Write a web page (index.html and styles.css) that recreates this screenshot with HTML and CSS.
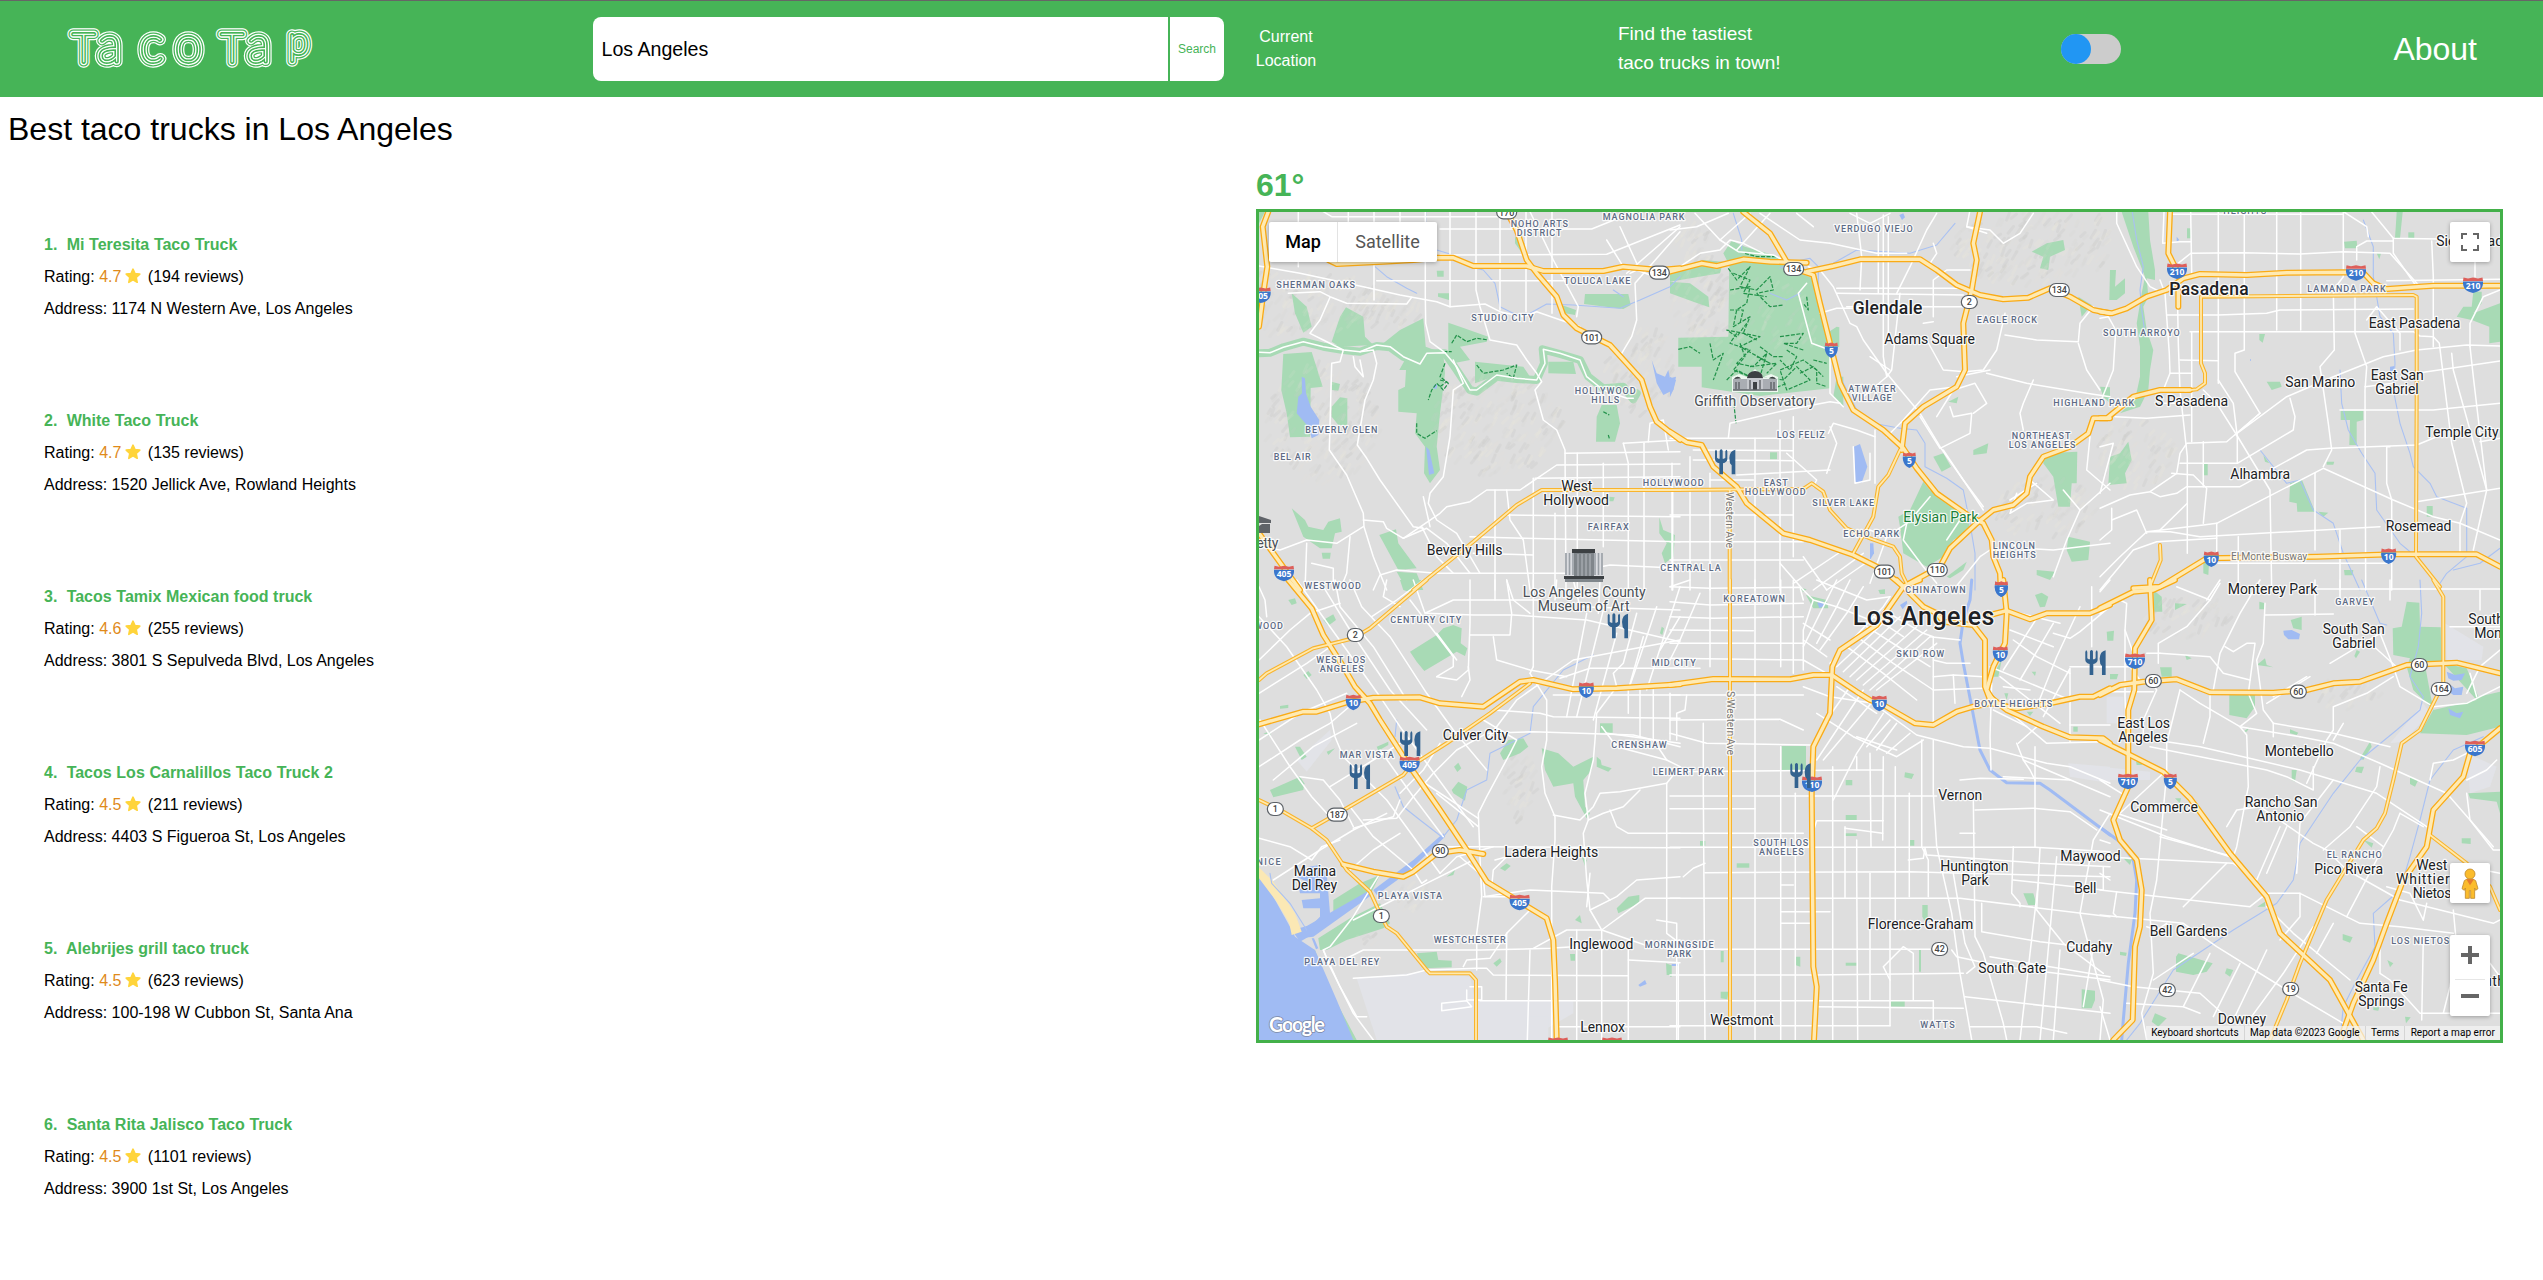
FILE: index.html
```html
<!DOCTYPE html>
<html lang="en">
<head>
<meta charset="utf-8">
<title>TacoTap</title>
<link rel="stylesheet" href="styles.css">
</head>
<body>
<header class="navbar">
  <svg class="logo" width="280" height="56" viewBox="0 0 280 56" role="img" aria-label="TacoTap">
    <defs>
      <text id="wordmark" y="40.500"><tspan class="cap" x="8.500">T</tspan><tspan class="low" x="34">a</tspan><tspan class="low" x="76">c</tspan><tspan class="low" x="111">o</tspan><tspan class="cap" x="157">T</tspan><tspan class="low" x="183">a</tspan><tspan class="pee" x="224.500" y="33">p</tspan></text>
    </defs>
    <use href="#wordmark" class="ring ring-5"/>
    <use href="#wordmark" class="ring ring-4"/>
    <use href="#wordmark" class="ring ring-3"/>
    <use href="#wordmark" class="ring ring-2"/>
    <use href="#wordmark" class="ring ring-1"/>
  </svg>
  <form class="search">
    <input class="search-input" type="text" value="Los Angeles" aria-label="City">
    <button class="search-button" type="button">Search</button>
  </form>
  <div class="current">Current<br>Location</div>
  <div class="tagline">Find the tastiest<br>taco trucks in town!</div>
  <div class="toggle"><span class="knob"></span></div>
  <a class="about">About</a>
</header>
<h1 class="heading">Best taco trucks in Los Angeles</h1>
<svg class="defs" width="0" height="0"><symbol id="star" viewBox="0 0 16 16"><path d="M8 1.2 10 5.6 14.8 6.1 11.2 9.4 12.2 14.3 8 11.9 3.8 14.3 4.8 9.4 1.2 6.1 6 5.6Z" fill="#ffd43b" stroke="#ffd43b" stroke-width="1.6" stroke-linejoin="round"/></symbol></svg>
<main class="content">
  <ul class="trucks">
    <li class="truck"><p class="name">1.&nbsp; Mi Teresita Taco Truck</p><p class="line">Rating: <span class="score">4.7</span><svg class="star"><use href="#star"/></svg> (194 reviews)</p><p class="line">Address: 1174 N Western Ave, Los Angeles</p></li>
    <li class="truck"><p class="name">2.&nbsp; White Taco Truck</p><p class="line">Rating: <span class="score">4.7</span><svg class="star"><use href="#star"/></svg> (135 reviews)</p><p class="line">Address: 1520 Jellick Ave, Rowland Heights</p></li>
    <li class="truck"><p class="name">3.&nbsp; Tacos Tamix Mexican food truck</p><p class="line">Rating: <span class="score">4.6</span><svg class="star"><use href="#star"/></svg> (255 reviews)</p><p class="line">Address: 3801 S Sepulveda Blvd, Los Angeles</p></li>
    <li class="truck"><p class="name">4.&nbsp; Tacos Los Carnalillos Taco Truck 2</p><p class="line">Rating: <span class="score">4.5</span><svg class="star"><use href="#star"/></svg> (211 reviews)</p><p class="line">Address: 4403 S Figueroa St, Los Angeles</p></li>
    <li class="truck"><p class="name">5.&nbsp; Alebrijes grill taco truck</p><p class="line">Rating: <span class="score">4.5</span><svg class="star"><use href="#star"/></svg> (623 reviews)</p><p class="line">Address: 100-198 W Cubbon St, Santa Ana</p></li>
    <li class="truck"><p class="name">6.&nbsp; Santa Rita Jalisco Taco Truck</p><p class="line">Rating: <span class="score">4.5</span><svg class="star"><use href="#star"/></svg> (1101 reviews)</p><p class="line">Address: 3900 1st St, Los Angeles</p></li>
  </ul>
  <section class="side">
    <div class="temp">61°</div>
    <div class="map">
      <svg id="canvas" class="canvas" viewBox="1259 212 1241 828"></svg>
      <div class="map-type"><span class="type-map">Map</span><span class="type-sat">Satellite</span></div>
      <div class="ctl full"><svg width="18" height="18" viewBox="0 0 18 18"><path d="M1 6V1H6M12 1H17V6M17 12V17H12M6 17H1V12" fill="none" stroke="#666" stroke-width="2"/></svg></div>
      <div class="ctl peg"><svg width="18" height="31" viewBox="0 0 54 93"><g stroke="#c18a2c" stroke-width="2.5" fill="#fbbc2c"><path d="M18 33H36L44 38 51 62 44 67 41 60V91H29V68H25V91H13V60L10 67 3 62 10 38Z"/><circle cx="27" cy="18" r="15"/></g><path d="M16 34H39L27 52Z" fill="#e57a2e"/></svg></div>
      <div class="ctl zoom"><span class="plus"></span><span class="rule"></span><span class="minus"></span></div>
      <div class="legal"><span>Keyboard shortcuts</span><span>Map data ©2023 Google</span><span>Terms</span><span>Report a map error</span></div>
    </div>
  </section>
</main>
<script src="map.js"></script>
</body>
</html>
```
FILE: styles.css
```css
* { box-sizing: border-box; }
body { margin: 0; height: 1280px; overflow: hidden; background: #fff; color: #000; font-family: "Liberation Sans", Arial, sans-serif; font-size: 16px; }
.navbar { display: grid; grid-template-columns: 593px 631px 124px 443px 333px 1fr; align-items: center; height: 97px; border-top: 1px solid #666; background: #46b457; color: #fff; }
.logo { margin-left: 64px; }
.logo text { font-family: Lato, sans-serif; font-weight: 100; }
.cap { font-size: 39px; }
.low { font-size: 49px; }
.pee { font-size: 37px; }
.ring { stroke-linejoin: round; }
.ring-5 { stroke: #fff; stroke-width: 11.4px; }
.ring-4 { stroke: #46b457; stroke-width: 9px; }
.ring-3 { stroke: #fff; stroke-width: 6.4px; }
.ring-2 { stroke: #46b457; stroke-width: 3.8px; }
.ring-1 { stroke: #fff; stroke-width: .5px; fill: #fff; }
.search { display: flex; gap: 2px; height: 64px; margin: 0; }
.search-input { width: 575px; height: 64px; padding: 0 8.5px; border: 0; border-radius: 8px 0 0 8px; font: 19.6px "Liberation Sans", Arial, sans-serif; color: #000; }
.search-button { width: 54px; height: 64px; padding: 0; border: 0; border-radius: 0 8px 8px 0; background: #fff; color: #46b457; font: 12px "Liberation Sans", Arial, sans-serif; }
.current { text-align: center; line-height: 24px; }
.tagline { padding: 0 0 2px 270px; font-size: 19px; line-height: 29px; white-space: nowrap; }
.toggle { width: 60px; height: 30px; margin-left: 270px; border-radius: 15px; background: #ccc; }
.knob { display: block; width: 30px; height: 30px; border-radius: 50%; background: #2196f3; }
.about { justify-self: end; padding-right: 66px; font-size: 32px; }
.heading { margin: 0; padding: 14px 8px 0; font-size: 32px; font-weight: 400; line-height: 37px; }
.defs { position: absolute; }
.content { display: flex; }
.trucks { list-style: none; width: 1256px; margin: 0; padding: 81px 0 0 44px; }
.truck { height: 176px; }
.truck p { margin: 0; line-height: 32px; }
.name { font-weight: 700; color: #46b457; word-spacing: .2px; }
.score { color: #e08a1a; }
.star { width: 18px; height: 16px; margin: 0 1px 0 3px; vertical-align: -2px; }
.side { width: 1247px; padding-top: 18px; }
.temp { height: 43px; line-height: 39px; font-size: 32px; font-weight: 700; color: #46b457; }
.map { position: relative; width: 1247px; height: 834px; border: 3px solid #43b049; overflow: hidden; background: #dedede; font-family: Roboto, sans-serif; }
.canvas { display: block; width: 1241px; height: 828px; }
.map-type { position: absolute; left: 10px; top: 10px; display: flex; height: 40px; border-radius: 2px; background: #fff; box-shadow: 0 1px 4px rgba(0,0,0,.3); font-size: 18px; line-height: 40px; }
.type-map { width: 69px; text-align: center; font-weight: 500; color: #000; border-right: 1px solid #e3e3e3; }
.type-sat { width: 99px; text-align: center; color: #565656; }
.ctl { position: absolute; right: 10px; width: 40px; display: flex; align-items: center; justify-content: center; border-radius: 2px; background: #fff; box-shadow: 0 1px 4px rgba(0,0,0,.3); }
.full { top: 10px; height: 40px; }
.peg { top: 651px; height: 40px; }
.zoom { top: 723px; height: 81px; flex-direction: column; justify-content: space-between; padding: 11px 0 18px; }
.plus { width: 18px; height: 18px; background: linear-gradient(#666,#666) center/18px 4px no-repeat, linear-gradient(#666,#666) center/4px 18px no-repeat; }
.rule { width: 30px; height: 1px; background: #e6e6e6; }
.minus { width: 18px; height: 4px; background: #666; }
.legal { position: absolute; right: 0; bottom: 0; display: flex; width: 354px; height: 14px; background: rgba(245,245,245,.7); font-size: 10px; line-height: 14px; color: #000; white-space: nowrap; letter-spacing: .04px; }
.legal span { flex: auto; text-align: center; }
.legal span + span { border-left: 1px solid #d5d5d5; }

.canvas text { font-family: Roboto, sans-serif; paint-order: stroke; stroke: rgba(255,255,255,.85); stroke-width: 2.4px; stroke-linejoin: round; }
.canvas polyline { fill: none; stroke-linejoin: round; stroke-linecap: round; }
.canvas .park { fill: #a8dab5; }
.canvas .band { stroke: #a8dab5; stroke-width: 8px; }
.canvas .water { fill: #a0bbf3; }
.canvas .sand { fill: #fbe8b4; }
.canvas .pale { fill: #e2e3e8; }
.canvas .stream { stroke: #a9c1f3; stroke-width: 1.1px; }
.canvas .river { stroke: #a0bbf3; stroke-width: 3px; }
.canvas .trail { stroke: #22924a; stroke-width: 1.2px; stroke-dasharray: 4 1.5; stroke-linecap: butt; }
.canvas .minor { stroke: #fff; stroke-width: 1.5px; }
.canvas .trunk-case { stroke: #f9b42d; stroke-width: 4px; }
.canvas .trunk { stroke: #ffe9ad; stroke-width: 1.8px; }
.canvas .motor-case { stroke: #faab15; stroke-width: 6px; }
.canvas .motor { stroke: #ffeab2; stroke-width: 3.4px; }
.canvas .city { font-size: 14px; fill: #202124; }
.canvas .town { font-size: 17.5px; font-weight: 500; fill: #202124; }
.canvas .metro { font-size: 25px; font-weight: 500; fill: #202124; }
.canvas .district { font-size: 9px; font-weight: 500; fill: #5d6b85; }
.canvas .poi { font-size: 14px; fill: #4a4f55; }
.canvas .green { font-size: 14px; fill: #188038; }
.canvas .street { font-size: 10.5px; fill: #777; }
.canvas .num { font-size: 9px; font-weight: 500; fill: #444; stroke: none; text-anchor: middle; }
.canvas .inum { font-family: "Open Sans", sans-serif; font-size: 8.6px; font-weight: 700; fill: #fff; stroke: none; text-anchor: middle; }
.canvas .brand { font-family: Lato, sans-serif; font-size: 20px; font-weight: 700; fill: #fff; stroke: #7d8aa8; stroke-width: 1.6px; }
```
FILE: map.js
```
// Map sheets: each has an origin (map pixels) and geometry in thirds of a pixel.
const sheets = [
{ o: [1240, 160],
  hills: "120,440,320,90;240,800,170,180;760,800,200,150;1200,640,110,130;420,470,120,50",
  park: "155,400 200,440 215,500 190,518 165,460;275,545 300,470 318,442 370,470 375,530 400,555 300,560;430,550 480,510 550,475 557,560 610,580 615,640 600,760 590,860 600,930 570,970 552,940 555,860 525,820 530,760 475,755 475,690 495,680 498,630 478,630 500,590;130,582 215,576 248,680 212,684 210,830 150,832 140,760 124,690;625,488 660,500 745,530 740,545 660,560 690,600 640,610 625,600;705,605 850,620 870,650 760,650 705,670;925,605 1000,605 1008,642 925,640;1085,735 1130,735 1140,790 1125,845 1068,845 1070,770;1035,402 1165,402 1172,435 1150,447 1032,432;590,332 611,332 611,350 592,350;594,400 627,400 627,420 594,410;275,665 300,672 295,692 275,690;275,740 300,712 322,715 322,795 295,795 275,770;155,1045 195,1080 205,1100 250,1110 265,1085 300,1075 305,1115 285,1120 275,1165 240,1165 190,1130;418,1125 468,1108 475,1150 530,1225 475,1230;470,1235 530,1240 550,1290 500,1290;1258,1072 1270,1110 1305,1125 1300,1190 1275,1210 1265,1180 1280,1150 1258,1120;825,230 853,250 850,285 825,250;57,155 75,155 57,190;245,1178 272,1178 270,1196 248,1196;1108,1010 1124,1012 1120,1024 1108,1024;950,430 1008,450 1005,465 975,460",
  band: "57,580 90,578 130,562 190,545 250,560 310,570 360,575 410,558 450,562 490,590 540,610 560,580 615,580 650,630 690,690 710,695 770,650 830,657 890,660 912,610 908,568 960,582 1020,600 1045,650 1090,685 1150,680 1180,718 1190,700",
  water: "185,650 195,655 198,700 212,740 238,780 235,825 215,835 205,800 170,760 175,710 186,700;558,860 568,870 583,940 567,945;1235,600 1250,640 1275,650 1285,630 1290,655 1308,650 1300,690 1270,705 1250,670;582,675 592,672 590,686 580,686",
  stream: "557,155 557,190;590,270 640,285 690,320 730,330 765,370 780,440 830,465 870,460 920,432 1000,435 1140,445 1200,420 1290,380 1320,350;405,320 440,350 500,385 530,400;1120,390 1150,410",
  trail: "635,550 650,525 680,545 710,535 745,540;615,610 600,650 625,670 610,690 590,670 575,690 565,720;530,790 530,820 555,835 590,812;710,615 730,640 790,630 830,615 820,655 800,640;610,575 635,575;1090,755 1108,765;1105,825 1108,835;600,660 620,665 600,680",
  minor: "175,155 175,320;325,155 325,280;402,155 402,420;480,155 480,290;556,155 556,410 557,490 570,545 615,578;630,155 630,440;708,155 708,390 720,440 750,540 830,555 860,600 890,640 905,665 885,690 910,780 950,810 975,870 978,1290;780,155 780,450;858,155 858,455;936,155 936,460;250,155 275,170 800,170;600,207 1055,207 1320,100;600,285 1100,283 1320,195;410,362 980,362;57,318 180,340 370,380 480,405 590,425 630,440 735,432 780,455 850,470 890,455 1020,500;145,400 240,395 270,410 320,430 500,432 515,412;270,412 240,480 210,520 250,540 310,570 300,605 275,610 268,870 320,945 370,1060 372,1100 400,1190 440,1290;57,577 90,578 130,562 190,545 250,560 310,570 360,575 410,555 450,560 490,590 540,612 560,580 615,578 650,620 690,690 710,690 770,645 830,655 890,660 915,610 910,568 960,580 1020,600 1040,650 1090,690 1160,715 1180,715;360,575 400,570 410,610 400,660 375,720 352,855 380,895 420,960 520,1100 550,1105;340,590 345,620 370,650 360,600;640,600 670,670 640,690 630,830 610,950 570,1000 565,1030 590,1080 650,1120 720,1240;975,880 1320,875;490,1135 600,1060 620,1040 690,1025 740,990 840,990 950,915 1320,912;370,1080 430,1085 440,1105 490,1135 560,1105 620,1150 690,1240;60,1160 120,1170 200,1140 290,1150 370,1100;765,990 765,1290;800,990 810,1080 850,1140 870,1290;880,955 880,1290;945,1060 945,1290;1012,880 1012,1290;1090,910 1090,1160;1150,850 1165,910 1165,1290;1212,850 1212,1290;1296,910 1296,1290;800,1065 1320,1070;690,1130 850,1135 1320,1145;700,1180 880,1185;400,1290 420,1245 470,1230 590,1240 980,1240 1110,1215 1320,1225;885,955 1320,950;1320,215 1185,370 1190,480 1175,530 1145,580;1170,340 1190,330 1230,345;1225,845 1230,790 1270,780 1285,870;1150,850 1320,840;870,155 940,300 1015,440 1010,470;1100,240 1150,320;1140,200 1190,310;1160,340 1320,200;545,1100 590,1190 640,1240;550,1010 570,1100;200,1150 195,1290;330,1130 320,1240 300,1290;215,1210 280,1225 280,1290",
  trunk: "1320,990 905,990 830,1035 700,1145 520,1290",
  motor: "85,155 68,200 75,260 82,320 70,400 57,500;57,1120 100,1180 140,1235 180,1290;265,300 290,312 430,305 520,300 590,293 640,293 700,318 860,318 910,333 1090,333 1150,320 1260,330 1320,325;800,155 830,210 860,300 890,340 950,410 970,465 1010,505 1060,530 1110,555 1160,610 1205,660 1230,740 1250,785 1320,840",
  district: "NOHO ARTS|812|984|200;DISTRICT|830|964|227;MAGNOLIA PARK|1088|1333|180;SHERMAN OAKS|109|345|384;TOLUCA LAKE|972|1171|372;STUDIO CITY|694|881|483;HOLLYWOOD|1004|1187|702;HILLS|1054|1138|729;BEVERLY GLEN|196|412|818;BEL AIR|101|212|899;HOLLYWOOD|1208|1391|978;FAIRFAX|1043|1166|1110;CENTRAL LA|1261|1442|1233;WESTWOOD|193|363|1286",
  city: "West|964|1057|993;Hollywood|910|1107|1035;Beverly Hills|560|787|1185",
  poi: "Getty|22|115|1165",
  oval: "1258,338,134;1055,532,101;800,157,170",
  inter: "62,405,405;132,1240,405" },
{ o: [1670, 190],
  hills: "80,330,90,130;250,430,180,160;1060,180,220,110;1120,960,150,90;60,160,50,60",
  park: "25,443 175,440 178,225 160,190 185,152 225,170 310,195 380,245 440,270 470,430 500,410 508,412 508,470 480,480 480,595 270,618 95,592 95,530 25,530;0,240 100,210 160,215 150,250 0,275;0,275 60,280 115,320 118,352 70,335 0,310;760,875 780,900 830,930 895,990 900,1020 850,1050 820,1100 770,1130 700,1090 690,1010 685,980 720,960;1120,790 1222,785 1220,880 1205,880 1200,950 1165,950 1150,860 1120,820;1195,1040 1260,1055 1255,1110 1205,1115 1190,1080;790,800 820,790 843,830 815,845;300,787 321,787 321,808 300,808;1225,320 1265,345 1235,380;1085,185 1130,160 1180,150 1185,180 1140,200 1135,240 1110,235 1120,200;910,780 955,760 950,790 910,795;1290,590 1320,592 1320,640 1300,620;500,560 520,560 520,650 490,620;830,1160 890,1115 880,1140 840,1165;1100,1140 1155,1145 1140,1170 1100,1155;835,635 865,620 860,640",
  water: "552,770 570,762 592,830 575,878 555,875;600,1060 610,1060 612,1090 600,1110;0,560 18,570 10,600 0,620;688,75 700,70 705,82 696,90",
  stream: "330,235 370,215 420,205 445,230 445,320 480,450 500,540 560,660 610,700 690,715;690,715 740,720 765,760 765,830 830,865 880,900 900,1000 915,1090 915,1200;490,220 560,180 720,190 800,165 855,100;300,310 350,330 390,310;450,360 470,430;190,70 215,150 215,180",
  trail: "225,190 260,200 320,200;175,235 200,270 240,230 210,290 260,300 300,260 310,300 260,310;180,300 240,290 230,340 200,360 190,410 240,380 220,430 260,450;200,430 180,460 240,480 200,520 250,530 290,490 270,560 340,570 380,530 420,570 350,600 330,540 400,510 440,540 440,580 470,590;120,460 130,510 160,490 130,570;25,478 60,470 90,490;260,310 300,350 340,345;230,400 200,440 170,420 270,440 210,470 300,520 260,500;330,440 400,430 380,460 340,460 400,480;410,320 415,360 400,340;170,570 200,540 260,570 300,600 350,580;240,530 320,520 290,550;190,625 198,700;430,510 470,520;270,470 310,500 340,500;180,360 220,360 210,400;190,250 240,270 220,310 290,320;210,460 225,500 190,540 240,560;350,480 380,500 360,540 330,510;390,550 430,530 460,560",
  minor: "75,70 150,150 205,185 310,195 350,215;0,120 80,110 175,70;150,150 240,70;200,180 300,70;270,70 390,150 480,160;380,70 430,110;0,250 90,190 150,180 180,150 220,160 280,190;415,230 450,240 490,290 540,400 560,410 580,450 650,550 750,670 810,770 880,870 940,950;560,70 575,200 570,300;540,70 600,100 660,70;625,100 625,310;640,75 640,500 650,560;655,80 655,450;480,160 620,190 710,190;680,310 720,230 770,120 800,70;500,295 890,295;500,310 880,315;530,350 900,350;690,310 665,540 650,560 580,620;790,160 800,190 780,220;790,380 790,270 830,240 900,240;660,540 600,500;900,60 890,110 950,130;1090,70 1050,130 1000,160 960,120 890,110;770,450 820,540 885,545 940,540 980,480 1005,370;1005,435 1100,450 1225,455 1230,400 1270,350;950,550 1070,580 1250,610 1320,620;1225,460 1250,540 1290,600;790,395 760,400;450,370 500,355 580,355;410,280 385,310 425,460 480,480 480,610 520,650;0,745 175,745 370,745;175,745 180,700 350,660 480,635 510,640;70,780 370,782;70,810 370,812;200,855 480,840;0,975 370,975;0,1055 400,1055;0,1110 400,1110;8,895 8,1200;60,800 60,1200;120,850 120,1200;255,745 255,1200;330,690 330,1200;370,680 370,1100;350,790 440,870 430,890;120,870 250,870;475,730 490,700 560,720 615,740;480,710 500,760 470,850;550,770 555,880 600,870 600,790;615,720 615,880;400,1100 470,1200;370,1180 520,1080;430,1200 580,1090;470,1200 600,1110;330,1120 400,1200;560,1040 600,1020 650,1040 600,1180;650,1040 710,1000 730,980 780,920;710,1000 700,1050 760,1130 800,1180;750,680 810,775 900,730 905,670 850,680 840,650;800,680 850,600 915,580 950,640 910,670;860,590 780,600 700,690 650,740;1090,570 1060,640 1050,670 1060,720;860,560 960,540;1040,910 1020,970 1070,940 1150,930 1080,870;1320,880 1230,960 1190,1050 1150,1160;1230,960 1180,900;1260,740 1250,840 1320,900;820,780 900,900 940,960;890,960 830,1050;1060,1075 1150,1080 1320,1060;850,1200 930,1100 960,1080;1100,880 1020,930",
  trunk: "0,900 400,897 425,880 460,905 480,960 530,1015 600,1045 670,1070 690,1100 695,1150 710,1180;690,780 655,855 625,890 610,980 550,1090;179,900 179,1200",
  motor: "0,245 95,220 140,228 220,208 300,215 410,218;410,245 490,228 570,208 750,208 800,240 860,285 930,315 1000,328 1075,323 1140,295 1200,320 1270,360 1320,370;220,66 300,130 350,215 385,240 430,255 450,340 485,480 510,580 550,660 640,720 700,775 740,835 800,910 900,980 940,1000 965,1050 970,1100 990,1150 992,1200;930,66 910,160 920,210 905,300 880,400 885,540 860,590 760,650 705,700 695,780;0,725 50,757 95,765 130,830 200,890 230,940 340,1030 420,1050 550,1095 640,1140 700,1190;1320,685 1270,685 1255,730 1200,770 1120,800 1080,860 1070,910 1030,945 970,960 920,1000 840,1075 810,1130 700,1190",
  district: "VERDUGO VIEJO|493|728|126;EAGLE ROCK|920|1101|399;SOUTH ARROYO|1299|1529|438;ATWATER|535|677|606;VILLAGE|545|665|633;HIGHLAND PARK|1150|1393|647;NORTHEAST|1025|1201|747;LOS ANGELES|1016|1216|774;LOS FELIZ|320|464|744;EAST|281|353|888;HOLLYWOOD|224|407|915;SILVER LAKE|427|612|948;ECHO PARK|520|688|1041;LINCOLN|968|1095|1077;HEIGHTS|968|1097|1104",
  town: "Glendale|548|757|373",
  city: "Adams Square|643|915|462",
  poi: "Griffith Observatory|73|436|648",
  green: "Elysian Park|700|925|996",
  oval: "371,237,134;898,336,2;1168,300,134;643,1145,101;802,1140,110",
  inter: "484,480,5;718,810,5;994,1197,5" },
{ o: [2100, 190],
  hills: "0,160,30,90;100,800,120,100",
  park: "65,66 145,66 150,150 165,240 165,270 140,265 145,320 130,350 140,420 160,480 150,540 145,600 120,650 60,670 105,630 120,560 120,470 110,400 125,310 135,260 100,170;30,240 48,240 45,290 75,265 75,310 50,330 28,330;890,66 908,66 900,145 885,145;732,155 770,152 772,175 735,175;261,115 272,115 272,145 261,145;1120,305 1145,305 1145,340 1120,370 1200,340 1200,455 1168,460 1168,410 1115,390 1070,380 1090,350 1115,350;500,575 540,575 545,590 515,600;722,662 790,662 790,690 770,695 770,765 748,765 750,690 722,690;570,880 605,868 645,965 592,965 590,940 568,935;980,948 998,948 998,980 980,980;30,800 60,790 85,755 95,810 75,850 80,880 25,885;312,820 323,820 323,856 312,856;925,127 943,127 943,145 925,145;478,432 495,432 488,458 478,450;732,1140 760,1140 758,1156 734,1156;310,1100 328,1110 325,1155 310,1150;655,965 685,968 670,980;680,815 703,815 700,824 680,824;830,190 843,190 838,208;490,795 508,820 495,815",
  water: "870,530 884,528 880,550 870,545;230,140 238,150 230,155;450,508 453,508 453,512 450,512",
  stream: "97,66 110,150 130,230 120,300 125,360 135,430;790,90 820,170 820,260 840,380 880,430 885,520 880,600 900,700 930,790 940,830 990,880 1010,920 1100,955 1100,1100 1040,1150 1020,1180;720,540 725,640 745,720 785,790 825,850 830,960 900,1060 960,1110;480,780 560,880 600,870 640,960 700,1000 730,1090 780,1200;1200,1075 1140,1120 1060,1140",
  minor: "50,66 50,100 110,230 150,290 190,310;272,66 275,250;192,66 188,160 240,155 272,155;212,73 730,73;222,230 272,190 430,188 600,192 730,185 870,190 960,290;355,66 355,580;433,66 433,480 405,490 405,545 480,670;530,66 530,420;602,66 602,420;730,66 730,260 700,300 703,480 660,530 685,700 695,780 670,830;732,66 800,110 805,140;815,66 880,145 1200,150;770,210 770,170 800,153 880,153;765,320 765,430 800,530 795,600 797,1200;880,145 880,190 950,290;995,153 1000,260 1000,470;200,375 355,375 500,370 540,360 940,357;270,425 940,425 960,438 1000,440 1018,460 1055,760 1100,940 1080,1000 1080,1090;480,670 405,735 560,620 700,560 850,500 950,480 1100,465 1200,468;0,955 90,915 150,905 230,850 240,790 260,760 380,755 480,670;0,385 25,380 47,420 40,540 0,640;180,270 195,310 208,490 210,550 190,600;233,360 235,460 240,600 262,800 262,1090;240,510 355,512;210,550 275,550;275,425 275,755;45,680 140,685 270,675;190,640 270,640;310,600 350,640 410,735 510,900 515,1200;355,570 400,640 412,740;240,820 412,820 580,720 585,680 570,625;150,905 180,920 230,910 260,890 420,890 520,835 620,780 690,775 950,765 1010,740;215,850 280,855 320,895 310,1000;140,1025 310,1005 350,1000 670,835 880,930 1000,980 1080,1000 1200,1050;0,1160 60,1100 140,1025 210,1025 300,1040 840,1010;0,1200 100,1080 170,1055 260,1050 350,1045;35,955 35,1020 0,1050;35,990 110,960 140,1030;262,940 180,1020;412,740 412,820;415,1040 415,1200;645,850 645,1080;720,1020 720,1200;870,770 860,770 860,880 875,930 875,1200;355,1120 870,1120;720,660 1000,660 1050,655 1200,640;950,550 1200,513;1140,755 1200,745;950,935 1200,895;1055,490 1060,540 1160,900 1120,1080;1110,470 1120,560 1160,900;1200,300 1150,320 1110,400 1110,470;310,755 310,890;350,1000 350,1120;1125,210 1125,260;860,272 1200,268;800,390 830,350 900,430 900,480;795,590 880,580;0,770 40,760 0,910",
  trunk: "255,602 290,598 315,580 315,550 303,520 303,320 940,315 950,320 950,600 948,1090;948,1100 1020,1190;180,1065 182,1110 150,1190;1128,290 1200,287",
  motor: "210,66 205,190 235,250;0,365 35,370 80,355 140,320 200,300 250,265 300,252 440,255 560,248 740,247 790,248 820,280 860,297 1000,287 1200,287;235,300 235,350;0,685 20,685 100,620 180,600 270,600;100,1195 180,1190 320,1105 650,1100 880,1093 1130,1093 1200,1130",
  district: "HEIGHTS|370|499|73;LAMANDA PARK|622|857|305",
  street: "El Monte Busway|393|622|1111",
  town: "Pasadena|208|446|316",
  city: "Sierra Madre|1009|1245|168;East Pasadena|806|1081|414;San Marino|556|766|591;East San|812|971|570;Gabriel|826|956|612;S Pasadena|165|384|648;Temple City|976|1196|741;Alhambra|391|570|867;Rosemead|857|1054|1023",
  inter: "231,243,210;768,248,210;1119,285,210;334,1107,10;866,1098,10" },
{ o: [1240, 580],
  hills: "830,620,50,110;520,960,60,40;370,1080,40,20",
  pale: "350,1195 560,1175 690,1190 705,1260 1000,1262 1000,1300 860,1380 410,1380;170,540 270,450 275,480 200,575;860,1310 925,1310 925,1380 860,1380",
  park: "510,215 590,165 610,145 640,135 665,145 662,190 682,205 675,228 650,215 553,273 530,245;480,0 545,0 520,40 490,30;780,520 805,480 850,475 865,500 840,520 790,540;905,505 955,520 1000,560 1060,530 1055,570 1030,600 1035,680 1050,700 1040,715 1005,650 1000,610 940,620 915,570;1070,530 1082,540 1085,555 1115,565 1105,575 1070,560;1080,430 1118,430 1118,458 1080,458;90,630 180,590 193,610 190,630 100,652;280,960 360,910 420,885 395,935 280,1025;235,1075 330,1015 420,970 450,1030 430,1045 320,1080 260,1110 240,1110;180,1095 225,1110 265,1220 350,1380 310,1380 260,1250 215,1160;530,1120 590,1115 595,1140 635,1142 635,1162 550,1165;1130,985 1165,950 1198,945 1198,970 1135,1000;635,630 655,605 682,620 675,662 640,640;165,500 180,500 200,530 185,540;250,120 280,103 288,120 265,137;190,285 205,273 215,285 200,297;120,378 145,374 145,384 120,386;642,560 655,548 664,565 652,576;780,865 800,850 812,858 795,873;410,500 445,485 445,495 415,512;760,1150 780,1135 785,1145 770,1160;1278,1150 1292,1155 1290,1185 1280,1185;145,60 165,55 170,70 155,75;1265,140 1272,145 1267,165 1260,160;990,1122 1005,1122 1005,1142 992,1142;1005,1020 1020,1005 1025,1030;70,460 90,455 92,468;620,890 645,870 640,885;1025,830 1040,840 1035,858;260,515 285,505 265,525",
  water: "57,890 100,950 150,1040 165,1070 225,1110 290,1260 340,1380 57,1380;170,1055 390,930 395,945 220,1070 180,1075;170,890 200,880 205,860 240,855 260,880 270,1000 255,1030 215,1035 240,1010 240,985 190,985 185,960 240,955 240,940 180,940 175,915 200,905;155,1050 235,1030 240,1050 180,1085;400,930 520,840 610,760 615,770 500,880 410,945;1195,1215 1215,1200 1220,1212 1200,1220;215,1075 222,1075 235,1105 228,1108",
  sand: "57,862 100,905 165,1000 185,1055 155,1065 148,1030 110,965 57,895",
  stream: "610,770 650,720 680,630 740,600 750,520 870,460 880,380 970,270 1060,225;605,770 540,720 490,680 465,620;90,880 95,910 150,970 200,1050;470,420 465,470",
  minor: "57,110 140,200 230,330 270,400 285,470 310,530 440,660 600,880;57,240 150,150 210,100 300,70;57,340 200,250 300,180;80,110 75,60 57,20;170,0 270,140 420,350 480,440 700,740;250,20 330,150 450,330 560,450;285,0 300,80 400,200 500,360;330,0 365,80 450,170 560,340 640,450 740,570;57,480 180,400 320,340;57,560 180,480 270,430 340,370;100,600 220,500 350,430;270,620 400,540 480,490;180,590 250,600 300,660 340,740;60,420 150,560 215,650 260,700;57,775 150,800 215,840 245,800 300,780;100,900 240,810 340,750 440,700;330,870 400,810 480,760;330,680 400,770 520,870 545,910 560,900;420,510 520,650 610,770;370,720 470,715 520,650 580,580 650,510 740,460 880,455 1180,465 1320,500;340,745 460,710 480,660;440,0 430,50 480,80;395,110 470,60 550,0;510,60 640,230 640,260 590,290;590,160 650,240;520,0 555,100 640,60 900,60;690,0 690,130 685,270 650,300 590,290;765,0 765,60;800,0 820,60 870,100;880,0 880,260;950,0 945,60;690,165 770,165 810,165 815,100 800,0;560,100 700,105 820,105 1040,120 1320,185;760,170 770,240 870,270 980,290;685,260 690,300 665,350;1000,0 1020,80 1320,90;1080,0 1075,100;880,260 870,280;1040,100 980,410;1090,90 1010,410;1130,160 1060,420;1190,100 1150,250 1120,280 1130,320 1070,400 1065,480 1060,540 1035,640 1045,720 1030,760 1040,900 1050,990 1085,1050 1085,1380;1210,170 1165,330 1165,400;1250,80 1200,230 1165,330;1320,20 1220,330;1320,110 1260,210;740,480 830,360 900,310 1000,240 1320,180;940,345 1320,345;760,390 900,400 940,410 1320,415;870,280 920,360 920,480 905,560 915,640 945,710 945,780 935,920 935,1380;730,420 830,480 810,520 740,650 715,700 720,830 725,950 710,1060 710,1170;540,600 715,715;590,640 715,740;480,640 550,570 600,490;1320,265 1050,265 960,295;1085,440 1130,500 1280,540 1320,560;1100,460 1320,490;940,705 1020,720 1060,680 1080,640 1140,635 1280,610 1320,560;1110,690 1130,740 1165,760 1320,760;1045,720 1090,700 1150,680 1200,630;600,800 715,800 1320,803;420,880 340,1010 270,1100 250,1110 270,1160 340,1300 400,1380;250,1110 300,1220 350,1310 380,1310;340,1020 400,990 540,920 700,840;600,880 650,830 760,800;660,830 730,890 735,950 810,950;730,950 870,930 1090,940 1110,960;1050,990 1130,950 1190,900 1320,890;1085,1050 1215,955 1320,955;880,1105 980,1050 1085,1050 1230,1100 1320,1080;310,1140 370,1110 720,1110 930,1105 1000,1100;670,1160 680,1140 750,1135 800,1060 870,990;340,1195 500,1185 560,1170 710,1165 740,1165 760,1185 1165,1187;720,1262 1320,1262;800,1060 798,1260;870,1110 862,1380;1010,1050 1010,1380;1165,1110 1165,1380;1165,1140 1320,1148;1280,610 1280,1060 1320,1090;1250,1020 1310,1030 1310,1380;605,1270 680,1262 695,1280 605,1292 605,1270;680,1230 680,1260 725,1260 725,1220 690,1220;950,1340 1320,1340;1050,880 1040,980;765,840 800,830 760,870 755,920;1200,330 1200,470;1240,330 1240,480 1280,540;1290,340 1290,480",
  trunk: "57,300 80,280 220,205 340,175 390,145 560,0;57,660 130,695 215,745 260,780 320,870 390,935 420,1000 440,1040 470,1060 560,1170 570,1180 690,1180 708,1200 708,1380;215,745 320,685 490,585 510,560 620,490 750,400 870,310",
  motor: "145,0 215,85 250,165 310,260 345,320 390,370 420,420 510,560 600,690 680,810 740,905 830,960 920,1015 940,1080 945,1200 950,1380;57,433 190,395 230,395 320,367 400,353 540,352 600,370 730,380 840,305 880,300 1000,328 1130,325 1320,313;310,853 400,875 490,890 520,875 590,820 660,810 730,822",
  district: "CENTURY CITY|451|664|128;WEST LOS|229|376|248;ANGELES|239|371|275;BRENTWOOD|-54|129|146;MID CITY|1235|1367|257;MAR VISTA|299|461|533;CRENSHAW|1114|1280|503;LEIMERT PARK|1238|1450|584;VENICE|8|122|854;PLAYA VISTA|413|606|956;WESTCHESTER|581|797|1088;PLAYA DEL REY|193|418|1154;MORNINGSIDE|1214|1421|1103;PARK|1281|1354|1130",
  city: "Culver City|608|804|480;Ladera Heights|793|1075|831;Marina|161|288|888;Del Rey|155|291|930;Inglewood|988|1180|1107;Lennox|1021|1155|1355",
  poi: "Los Angeles County|848|1217|51;Museum of Art|893|1169|93",
  oval: "346,165,2;106,687,1;292,704,187;601,813,90;424,1008,1",
  inter: "340,367,10;1039,330,10;509,553,405;839,967,405;954,1395,405;1116,1395,405" },
{ o: [1670, 580],
  pale: "1195,550 1320,560 1320,610 1200,590",
  park: "335,498 408,498 408,570 335,570;1095,45 1115,38 1135,50 1125,80 1110,82;408,45 470,60 475,85 430,85;1235,1228 1275,1232 1275,1260 1265,1285 1235,1285;1060,940 1090,940 1100,975 1075,975;757,975 773,975 773,1010 765,1025 757,1010;527,705 560,705 560,720 527,720;527,600 547,600 547,616 527,616;525,760 560,760 560,768 525,768;718,780 733,780 733,797 718,797;200,850 238,850 238,863 200,863;90,783 106,783 106,797 90,797;663,1263 704,1263 704,1280 663,1280;376,1130 391,1130 391,1160 376,1155;152,1113 161,1113 161,1147 152,1147;527,1148 560,1148 560,1157 527,1157;747,1110 753,1110 753,1175 747,1175;152,1235 175,1235 172,1258 152,1255;1210,440 1223,440 1223,455 1210,455;705,577 732,582 725,597 703,592;1003,340 1015,340 1010,360;965,290 995,240 985,290;1085,275 1098,275 1095,288;0,1155 5,1155 5,1190 0,1190;625,30 645,28 645,42 630,42;385,22 410,28 400,36;1070,395 1090,395 1080,408",
  water: "442,68 458,64 464,78 448,84;690,75 710,62 712,70 698,88;5,1152 24,1152 24,1158 5,1158",
  river: "905,0 900,60 880,120 870,190 880,250 905,380 930,510 960,570 1010,608 1110,610 1140,630 1220,690 1320,765",
  minor: "0,20 120,25 390,22 400,60;60,0 0,20;0,65 120,75 400,70;0,110 130,115 400,110;0,150 250,152;0,190 400,190;0,235 400,240;90,40 30,180 0,240;120,0 120,260;255,0 255,1380;332,0 332,260;370,0 370,280;0,265 90,265;0,345 400,345;50,345 45,390 20,400 20,480;100,430 100,620 105,1380;0,420 330,418 400,450;0,460 110,490 420,495;0,575 560,570;0,648 800,648;0,686 255,686;0,760 400,760;0,802 1095,802 1320,815;105,878 720,875 880,880 1320,890;40,890 70,865 105,850;0,955 870,955 1320,1010;0,1108 780,1108;0,1185 430,1185 880,1180;0,1262 790,1262;0,1337 660,1337;25,1150 25,1380;332,500 332,1380;376,640 376,1380;332,915 370,915;332,995 480,995;332,1030 420,1030;488,560 488,1380;525,740 525,955;600,520 603,800;560,780 560,880 563,1380;640,530 638,780;600,880 600,1260;676,560 676,1040;718,640 718,950;755,480 755,800 775,840 775,950;790,480 790,640 800,800 845,1000 870,1180 905,1380;560,530 560,570 640,570;415,800 440,722 640,722;525,745 638,760;715,840 760,835 765,805 770,825 1110,850 1320,860;850,880 885,1090 915,1160 890,1180;910,650 915,1070 940,1120 1000,1330 1010,1380;915,690 1090,685 1200,695 1280,750;870,760 915,760;870,600 930,595 1060,598;1000,590 1200,600;1095,500 1095,800;965,310 960,470 963,570;400,320 480,350 610,370 740,465 880,500 960,505 1130,550 1200,560 1320,610;400,270 400,150 430,60;400,130 480,180;400,180 470,230;400,240 470,280;480,250 640,80 660,50;500,260 660,110;520,275 690,110;540,290 720,120;560,300 740,140;580,315 770,150;600,330 780,170;620,330 800,190;470,420 540,320;440,540 580,330;460,540 620,350;490,660 560,520 640,400;590,500 660,420;620,510 680,430;650,520 720,460;440,400 550,470 680,530 760,480;560,470 680,510;500,320 620,400;590,140 700,210 780,260;560,170 670,250 790,330;530,200 640,280 740,360;610,110 700,170;640,90 760,160 790,170 790,440;400,30 430,60 500,80 600,120;500,0 470,60 420,160 400,200;540,0 500,80 440,190;580,20 530,100 450,210;440,0 590,60 660,50;780,170 870,180;790,240 830,250 900,250;790,290 850,285 940,290;790,330 940,325;850,285 855,370;1010,90 1170,130;1020,150 1150,200;1030,180 1100,230 1200,280;1000,270 1110,100;1050,300 1150,130;1100,380 1160,230 1230,80;1000,320 1080,330;960,260 1200,360;990,290 1170,430;1120,410 1200,265 1200,485;1200,260 1320,260;1200,435 1320,435;970,390 1070,440;1010,390 1130,490 1300,485;1040,490 1060,540 1080,570 1095,600;1045,490 1100,440;1150,160 1200,175 1230,155 1320,80;1265,20 1265,200;1110,805 1105,900 1100,990 1180,1090 1300,1180;1105,910 1080,1120 1050,1380;1030,800 1025,940 1050,970 1050,980;1320,700 1270,780 1230,1000 1300,1260 1290,1380;1160,830 1110,1380;1270,1100 1240,1280;935,970 935,1055 1110,1085 1320,1110;845,1110 860,1130 1000,1160 1320,1200;700,1100 730,1120 730,1260;660,1200 640,1160 700,1100;660,1040 660,1260 660,1337;885,1250 1320,1300;900,1340 1100,1340 1190,1360;440,1280 880,1285;790,1262 790,1340;1170,1110 1150,1380;960,1130 1320,1190;1030,900 1300,930;1060,540 1320,650",
  trunk: "180,0 180,1380",
  motor: "0,315 130,297 360,298 430,285 485,285 560,335 600,360 640,375 735,430 790,435 860,395 910,380 960,370 1040,385 1140,370 1230,350 1270,350 1320,325;700,20 620,135 510,210 487,260 480,400 430,500 425,640 430,1160 440,1220 432,1380;700,20 750,0;680,0 760,80 800,100 820,125 910,135 945,180 945,320 960,360;1000,0 1010,100 1005,190 970,260 950,330 975,370;960,105 1010,92 1080,118 1130,100 1260,100 1320,75;960,350 1010,390 1120,440 1200,472 1300,475 1320,490",
  district: "KOREATOWN|160|345|66;CHINATOWN|706|887|38;SKID ROW|679|823|230;BOYLE HEIGHTS|913|1147|380;SOUTH LOS|250|415|797;ANGELES|267|401|824;WATTS|751|854|1343",
  metro: "Los Angeles|548|973|134",
  city: "Vernon|805|937|660;Maywood|1171|1352|844;Huntington|811|1016|873;Park|874|956|915;Bell|1213|1279|939;Florence-Graham|593|910|1047;Cudahy|1189|1327|1116;South Gate|925|1129|1179;Westmont|121|311|1335",
  oval: "809,1107,42",
  inter: "994,27,5;991,222,10;628,370,10;426,612,110" },
{ o: [2100, 580],
  hills: "250,120,130,60;740,350,100,40",
  pale: "1035,130 1150,200 1145,240 1040,240;20,350 70,350 70,430 20,430;0,560 150,575 150,600 0,600;870,490 970,370 990,400 910,485;1100,520 1190,560 1170,620 1110,640",
  park: "878,145 905,140 920,65 958,68 960,140 1022,142 1025,250 975,255 1000,390 940,330 920,260 930,235 880,225;1030,250 1100,265 1135,350 1200,335 1200,440 1100,465 960,460 1000,390 1130,360;388,345 465,340 465,380 440,415 388,405;160,30 185,50 187,95 163,95;228,1130 235,1120 338,1150 320,1175 280,1185 228,1175;780,535 810,485 815,500 790,540;165,1300 200,1315 175,1340 155,1325;572,120 605,110 605,150 580,145;225,70 260,72 225,90;478,65 495,70 493,88 478,88;470,255 495,235 500,255 520,262;20,155 42,152 40,182 22,182;30,282 55,282 50,298 30,298;180,262 215,262 215,290 185,290;930,590 955,600 945,620 930,612;1105,640 1200,635 1200,700 1190,665 1110,655;1085,775 1112,775 1112,792 1085,790;728,1062 758,1072 750,1088 728,1080;575,570 590,570 585,605 575,600;770,560 792,560 785,580 765,575;472,980 495,965 495,980;380,1165 400,1170 390,1190 375,1180;862,1140 880,1150 870,1162;60,1115 80,1118 78,1128 60,1125;570,448 595,458 590,465 570,460;770,210 780,215 768,235 763,228;225,655 243,655 240,670;915,1310 932,1312 918,1330;108,545 130,545 125,555 110,555;790,780 820,790 815,803;70,835 95,840 90,855;430,455 450,440 440,455;820,1282 838,1282 835,1292 820,1290;255,225 275,235 260,240",
  water: "550,152 575,150 600,162 597,178 565,178 552,165;1040,275 1065,285 1095,280 1085,300 1060,302 1045,295;1045,310 1065,325 1090,320 1085,345 1060,345 1040,330;1045,385 1070,400 1090,395 1080,415 1050,405",
  river: "0,742 60,785 100,840 110,900 105,1000 85,1150 70,1320 65,1380",
  stream: "960,0 965,100 955,200 930,290 970,350 960,390 890,450 780,540 700,640 600,790 580,900 530,970 400,1050 220,1170 120,1330 80,1380;785,0 840,130 860,135;1150,470 1060,510 990,600 960,720 930,830 900,930 820,1000 825,1100 770,1200 730,1280 720,1380",
  minor: "0,600 80,650;0,100 60,60 80,70 75,150 100,220;30,0 0,35;230,20 330,60 360,10;330,60 260,140 175,190 175,250;360,0 320,60;480,0 420,100 360,220 340,330;495,70 490,190 470,240 490,390 520,430 520,470;495,105 700,102;600,27 1200,27;645,0 645,105;720,0 720,60;870,0 870,60;375,200 400,215 440,190 465,190 445,340 470,400 420,440 440,465 445,620 410,800 400,830;180,220 330,230 370,280 450,300;0,260 90,260 120,300;0,335 160,335;150,300 170,330 130,420 130,460;240,330 300,370 420,440 600,470;240,330 200,490 200,580 170,900 150,1000 160,1180 125,1300 140,1380;330,340 330,410 310,490;100,470 300,500 600,570 700,600 830,640 980,740;520,430 700,460 870,500;600,470 700,490 840,550 1040,640 1180,800;620,290 520,350;690,250 840,160 880,260 900,320 1000,380 1100,370 1200,320;800,180 900,270;630,290 500,370;880,290 800,340 700,380 700,450 680,480 620,610;1140,30 1140,90;1200,210 1140,260 1100,340;1050,140 1200,140;1110,280 1130,350;150,500 500,570 560,590 600,610 640,630 640,560;0,690 150,750 200,770 390,830;50,700 200,750;0,780 30,790;60,700 190,580;380,740 410,690 480,680 640,790 680,810 740,870 900,960 1180,1030 1200,1020;540,740 470,900;700,600 600,730 590,880;900,700 880,750 840,820 740,1010;840,560 830,620 750,740 670,810;730,430 700,480;1100,640 1110,720 1180,810 1200,810;1100,600 1160,570 1190,540;0,830 400,850 470,900;0,930 450,980 500,940 600,940 780,1030 900,1040 1060,1060;250,980 380,850;50,935 40,1000 50,1010;0,1005 250,1030 350,1100 560,1230 730,1330;140,1040 170,1050 200,1030;0,1200 100,1220 300,1240 400,1330;160,1200 280,1120;80,1270 250,1280 300,1300;250,1280 330,1120;340,1310 420,1150;400,1320 500,1110;440,1330 550,1180 640,1040;500,980 580,1060 750,1200;600,940 600,1010 540,1080;560,740 500,880;180,770 400,830;770,740 850,800;990,600 1000,550 1060,540 1100,520;900,700 970,740;840,1180 870,1200 960,1300 1200,1300;970,1080 965,1320;970,1020 930,940 860,920;1060,990 1070,1100 1050,1220 1030,1300;970,1020 980,970;1150,870 1200,880;1170,1150 1200,1190;840,1070 840,1180;0,880 30,900;0,1090 30,1090;0,1280 30,1380;10,860 10,930;650,1120 700,1030;140,220 180,220;75,150 75,350 80,500",
  trunk: "1000,0 1030,50 1030,240 1030,310 960,450 905,490 880,600 855,700 830,745 790,780 680,960 600,1150 560,1260 510,1380;990,765 1100,850 1170,920 1200,990",
  motor: "0,85 100,35 160,30 225,0;150,0 155,120 105,205 103,330 85,390 85,620 40,720 60,780 110,840 125,930 120,1040 105,1100 98,1320 40,1380;0,345 60,315 130,305 230,298 330,337 520,338 620,330 700,310 780,305 920,255 1070,248 1200,280;0,480 80,520 190,575 270,655 390,820 500,950 540,1060 690,1200 790,1380;1200,445 1110,520 1090,590 1000,690 980,800 910,900 860,1030 820,1140 760,1270 720,1380",
  district: "GARVEY|706|822|75;EL RANCHO|680|845|834;LOS NIETOS|874|1048|1092",
  city: "Monterey Park|383|652|42;South San|668|854|162;Gabriel|697|827|204;South El|1105|1255|132;Monte|1123|1240|174;East Los|52|210|445;Angeles|55|204|487;Montebello|494|701|529;Commerce|91|294|697;Rancho San|434|652|682;Antonio|469|613|724;Pico Rivera|643|849|882;West|949|1042|871;Whittier-Los|888|1138|913;Nietos|938|1054|955;Bell Gardens|149|382|1069;Santa Fe|764|923|1237;Springs|775|914|1279;South|1100|1215|1217;Downey|353|498|1332",
  oval: "160,303,60;595,335,60;958,255,60;1024,327,164;202,1230,42;572,1227,19",
  inter: "105,243,710;84,604,710;211,604,5;1125,505,605" }
];

const canvas = document.getElementById("canvas");
let out = "";
const list = s => (s ? s.split(";") : []);
const pts = (s, o) => s.split(" ").map(p => p.split(",").map((v, i) => (o[i] + v / 3).toFixed(1)).join(",")).join(" ");
function lines(key, cls) {
  for (const t of sheets) for (const s of list(t[key])) out += `<polyline class="${cls}" points="${pts(s, t.o)}"/>`;
}
function areas(key) {
  for (const t of sheets) for (const s of list(t[key])) out += `<polygon class="${key}" points="${pts(s, t.o)}"/>`;
}

// Relief: short strokes scattered over the hilly areas, always in the same places.
let seed = 7;
const rnd = () => (seed = (seed * 16807) % 2147483647) / 2147483647;
function relief(opacity) {
  for (const t of sheets) for (const h of list(t.hills)) {
    const [cx, cy, rx, ry] = h.split(",").map(Number);
    for (let i = 0; i < rx * ry / 260; i++) {
      const a = rnd() * 6.28, r = Math.sqrt(rnd());
      const x = t.o[0] + (cx + Math.cos(a) * r * rx) / 3, y = t.o[1] + (cy + Math.sin(a) * r * ry) / 3;
      out += `<path d="M${x.toFixed(1)} ${y.toFixed(1)}l${(2 + rnd() * 4).toFixed(1)} ${(-3 - rnd() * 5).toFixed(1)}" stroke="${rnd() > .5 ? "#cfcfcd" : "#e7e5dc"}" stroke-width="3" stroke-linecap="round" opacity="${opacity}"/>`;
    }
  }
}

areas("pale");
relief(.4);
areas("park");
lines("band", "band");
relief(.12);
areas("water");
areas("sand");
lines("stream", "stream");
lines("river", "river");
lines("trail", "trail");
lines("minor", "minor");
lines("trunk", "trunk-case");
lines("motor", "motor-case");
lines("trunk", "trunk");
lines("motor", "motor");

// Landmarks
out += `<g transform="translate(1564 549)"><path d="M8 0H31V4H8Z" fill="#3c4043"/><path d="M1 4H39V27H1Z" fill="#dadce0"/><path d="M2 4V26M5.500 4V26M9 4V26M31 4V26M34.500 4V26M38 4V26" stroke="#9aa0a6" stroke-width="1.600"/><path d="M10 4H30V27H10Z" fill="#80868b"/><path d="M14 5V27M18 5V27M22 5V27M26 5V27" stroke="#b5b9bf" stroke-width="1"/><path d="M0 27H40V30H0Z" fill="#3c4043"/><path d="M1 30H39V33H1Z" fill="#80868b"/></g>`;
out += `<g transform="translate(1733 372)"><path d="M-1 18V5L6 2 14 5 22-3 30 5 38 2 45 5V20H-1Z" fill="#fff" opacity=".8"/><path d="M0 7H44V18H0Z" fill="#a9adb3"/><path d="M1 7A4 4 0 0 1 8 6.500ZM36 6.500A4 4 0 0 1 43 7ZM14 6A8 7 0 0 1 30 6Z" fill="#3c4043"/><path d="M14 6H30V18H14Z" fill="#c6c9ce"/><path d="M3 10V17M6 10V17M38 10V17M41 10V17M17 8V17M27 8V17" stroke="#5f6368" stroke-width="1.400"/><path d="M20 10H24V18H20Z" fill="#3c4043"/><path d="M0 18H44" stroke="#5f6368" stroke-width="1.500"/></g>`;
out += `<path d="M1259 516L1271 520V523H1259ZM1262 524H1270V531H1259V526ZM1259 531H1270V533H1259Z" fill="#5f6368"/>`;

for (const cls of ["street", "district", "poi", "green", "city", "town", "metro"])
  for (const t of sheets) for (const s of list(t[cls])) {
    const [text, a, b, y] = s.split("|");
    out += `<text class="${cls}" x="${(t.o[0] + a / 3).toFixed(1)}" y="${(t.o[1] + y / 3).toFixed(1)}" textLength="${((b - a) / 3).toFixed(1)}">${text}</text>`;
  }
out += `<text class="street" transform="translate(1725.500 492) rotate(90)" textLength="56">Western Ave</text>`;
out += `<text class="street" transform="translate(1726.500 691) rotate(90)" textLength="64">S Western Ave</text>`;

// Route shields
for (const t of sheets) {
  for (const s of list(t.oval)) {
    const [x, y, n] = s.split(",");
    const w = n.length > 2 ? 20 : 16, X = t.o[0] + x / 3, Y = t.o[1] + y / 3;
    out += `<rect x="${X - w / 2}" y="${Y - 6.5}" width="${w}" height="13" rx="6.500" fill="#fff" stroke="#5b6066" stroke-width="1.200"/><text class="num" x="${X}" y="${Y + 3.3}">${n}</text>`;
  }
  for (const s of list(t.inter)) {
    const [x, y, n] = s.split(",");
    const w = n.length > 2 ? 10 : n.length > 1 ? 7.5 : 6.5, X = t.o[0] + x / 3, Y = t.o[1] + y / 3;
    out += `<g transform="translate(${X} ${Y})"><path d="M${-w} -3.500C${-w - .5} 3 ${-w + 3} 6.500 0 8C${w - 3} 6.500 ${w + .5} 3 ${w} -3.500Z" fill="#3a76cc"/><path d="M${-w} -4L${-w + .5} -7.500 ${-w / 2} -6.500 0 -7.500 ${w / 2} -6.500 ${w - .5} -7.500 ${w} -4Z" fill="#dd5f5a"/><text class="inum" y="3.700">${n}</text></g>`;
  }
}

// Taco truck markers
for (const [x, y] of [[1715, 449.3], [1607.7, 613.3], [1400, 731], [1349.7, 764], [1790.3, 763], [2085.3, 650]])
  out += `<path transform="translate(${x} ${y}) scale(.3333)" fill="#33628f" d="M0 6Q3 -4 6 6V25L10 28H14V4Q19 -4 23 4V28H27L31 25V6Q35 -4 37 6V30Q36 39 24 42V75H13V42Q1 39 0 30ZM61 1Q44 4 43 26L45 42 50 48V75H61Z"/>`;

out += `<text class="brand" x="1269" y="1032" textLength="56">Google</text>`;
canvas.innerHTML = out;
```
